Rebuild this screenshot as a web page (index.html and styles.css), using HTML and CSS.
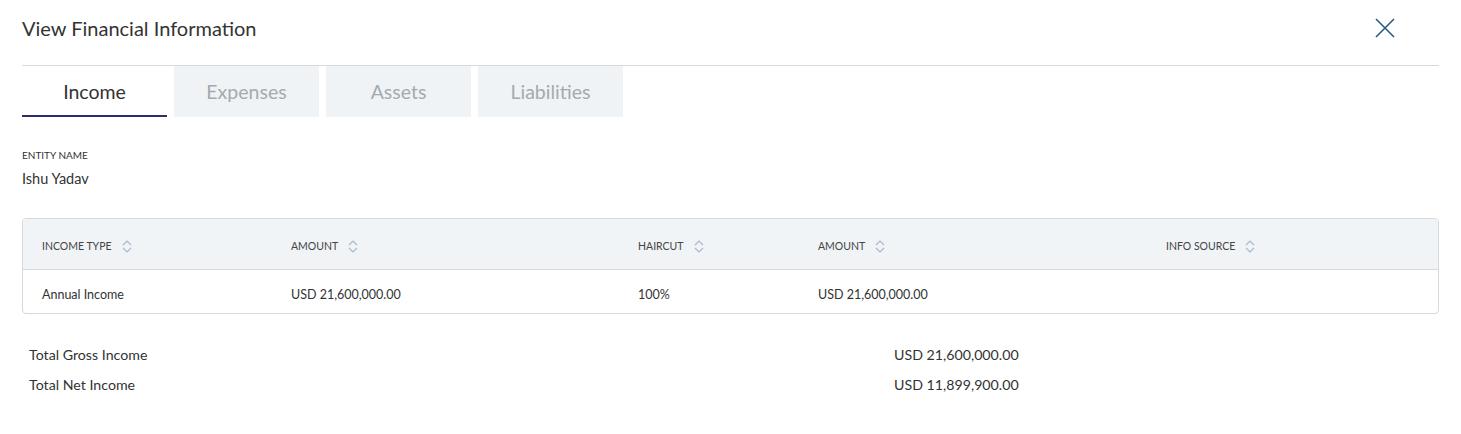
FILE: index.html
```html
<!DOCTYPE html>
<html lang="en">
<head>
<meta charset="utf-8">
<title>View Financial Information</title>
<link rel="stylesheet" href="styles.css">
</head>
<body>
<div class="modal">
  <header class="modal-header">
    <h1 class="modal-title">View Financial Information</h1>
    <button class="close-btn" aria-label="Close">
      <svg width="20" height="20" viewBox="0 0 20 20"><path d="M1 1 L19 19 M19 1 L1 19" stroke="#2c5a88" stroke-width="1.6" fill="none"/></svg>
    </button>
  </header>

  <nav class="tabs">
    <div class="tab active">Income</div>
    <div class="tab">Expenses</div>
    <div class="tab">Assets</div>
    <div class="tab">Liabilities</div>
  </nav>

  <section class="entity">
    <div class="entity-label">ENTITY NAME</div>
    <div class="entity-value">Ishu Yadav</div>
  </section>

  <div class="table">
    <div class="trow thead">
      <div class="th">INCOME TYPE <span class="sort"><svg width="10" height="13" viewBox="0 0 10 13"><path d="M1 5 L5 1 L9 5 M1 8 L5 12 L9 8" stroke="#a9b8cd" stroke-width="1.2" fill="none"/></svg></span></div>
      <div class="th">AMOUNT <span class="sort"><svg width="10" height="13" viewBox="0 0 10 13"><path d="M1 5 L5 1 L9 5 M1 8 L5 12 L9 8" stroke="#a9b8cd" stroke-width="1.2" fill="none"/></svg></span></div>
      <div class="th">HAIRCUT <span class="sort"><svg width="10" height="13" viewBox="0 0 10 13"><path d="M1 5 L5 1 L9 5 M1 8 L5 12 L9 8" stroke="#a9b8cd" stroke-width="1.2" fill="none"/></svg></span></div>
      <div class="th">AMOUNT <span class="sort"><svg width="10" height="13" viewBox="0 0 10 13"><path d="M1 5 L5 1 L9 5 M1 8 L5 12 L9 8" stroke="#a9b8cd" stroke-width="1.2" fill="none"/></svg></span></div>
      <div class="th">INFO SOURCE <span class="sort"><svg width="10" height="13" viewBox="0 0 10 13"><path d="M1 5 L5 1 L9 5 M1 8 L5 12 L9 8" stroke="#a9b8cd" stroke-width="1.2" fill="none"/></svg></span></div>
    </div>
    <div class="trow tbody">
      <div class="td">Annual Income</div>
      <div class="td">USD 21,600,000.00</div>
      <div class="td">100%</div>
      <div class="td">USD 21,600,000.00</div>
      <div class="td"></div>
    </div>
  </div>

  <div class="totals">
    <div class="total-label">Total Gross Income</div>
    <div class="total-value">USD 21,600,000.00</div>
    <div class="total-label">Total Net Income</div>
    <div class="total-value">USD 11,899,900.00</div>
  </div>
</div>
</body>
</html>
```

FILE: styles.css
```css
* { box-sizing: border-box; }
html, body { margin: 0; padding: 0; background: #ffffff; }
body {
  font-family: "Lato", "Noto Sans", sans-serif;
  color: #333333;
}
.modal {
  padding: 0 22px;
  width: 1461px;
}
.modal-header {
  display: flex;
  align-items: center;
  justify-content: space-between;
  height: 66px;
  padding-bottom: 9px;
  border-bottom: 1px solid #d9d9d9;
}
.modal-title {
  margin: 0;
  font-size: 20px;
  font-weight: 400;
  color: #333333;
  line-height: 24px;
}
.close-btn {
  border: 0;
  background: transparent;
  padding: 0;
  margin-right: 44px;
  width: 20px;
  height: 20px;
  display: flex;
}
.tabs {
  display: flex;
  gap: 7px;
}
.tab {
  width: 145px;
  height: 51px;
  display: flex;
  align-items: center;
  justify-content: center;
  background: #f0f3f6;
  color: #a6a9ad;
  font-size: 19.5px;
  padding-bottom: 1px;
}
.tab.active {
  background: #ffffff;
  color: #333333;
  border-bottom: 2px solid #2b2e6e;
  padding-top: 1px;
  padding-bottom: 0;
}
.entity {
  margin-top: 31px;
}
.entity-label {
  font-size: 10px;
  line-height: 14px;
  color: #333333;
}
.entity-value {
  margin-top: 7px;
  font-size: 14.5px;
  line-height: 20px;
}
.table {
  margin-top: 29px;
  border: 1px solid #d9d9d9;
  border-radius: 4px;
  overflow: hidden;
}
.trow {
  display: grid;
  grid-template-columns: 249px 347px 180px 348px 1fr;
  padding-left: 19px;
  align-items: center;
}
.thead {
  height: 51px;
  background: #f1f4f7;
  border-bottom: 1px solid #d9d9d9;
}
.tbody {
  height: 43px;
}
.th {
  font-size: 10.5px;
  color: #444444;
  display: flex;
  align-items: center;
  gap: 10px;
  padding-top: 4px;
}
.sort { display: flex; }
.td {
  font-size: 12.5px;
  color: #333333;
  padding-top: 5px;
}
.totals {
  margin-top: 26px;
  display: grid;
  grid-template-columns: 865px auto;
  padding-left: 7px;
}
.total-label, .total-value {
  font-size: 14.2px;
  line-height: 30px;
  color: #333333;
}
```
